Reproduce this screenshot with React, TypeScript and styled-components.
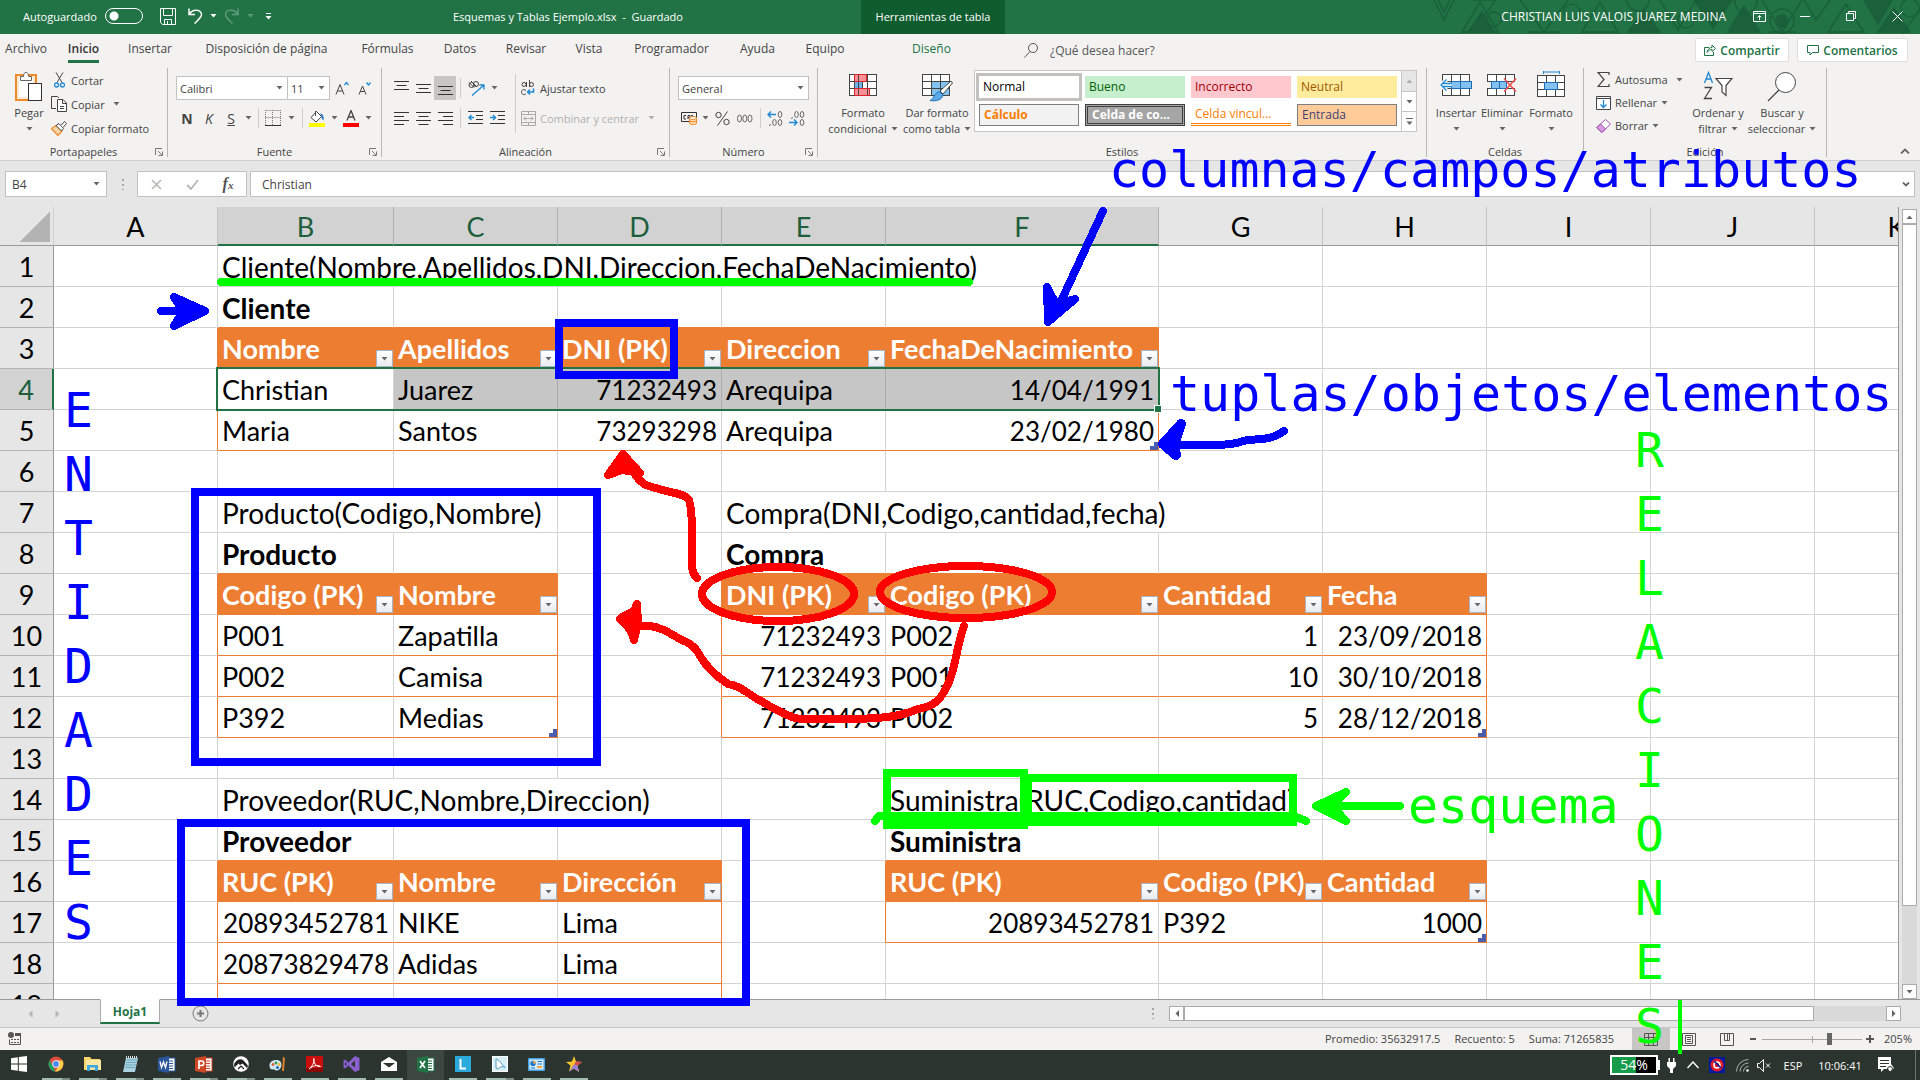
import React from "react";
import styled, { createGlobalStyle, css } from "styled-components";

const uiFont = '"Open Sans", "Noto Sans", sans-serif';
const cellFont = 'Lato, "Open Sans", sans-serif';
const monoFont = '"DejaVu Sans Mono", "Liberation Mono", monospace';

const GlobalStyle = createGlobalStyle`
  *, *::before, *::after { box-sizing: border-box; }
  body { margin: 0; background: #e6e6e6; font-family: ${uiFont}; font-size: 11px; color: #444; }
  button, input, select { font: inherit; color: inherit; margin: 0; padding: 0; border: 0; background: none; border-radius: 0; }
  a { color: inherit; text-decoration: none; }
`;

const Window = styled.div`
  position: relative;
  display: flex;
  flex-direction: column;
  height: 100vh;
  overflow: hidden;
  white-space: nowrap;
`;

/* ---------- title bar ---------- */

const TitleBar = styled.header`
  position: relative;
  display: flex;
  align-items: stretch;
  flex: none;
  height: 34px;
  padding-bottom: 2px;
  background: #217346;
  color: #fff;
`;

const Pattern = styled.svg`
  position: absolute;
  right: 0;
  top: 0;
`;

const QuickAccess = styled.div`
  display: flex;
  align-items: center;
  flex: 0 0 453px;
  padding-left: 23px;
`;

const AutoSave = styled.label`
  display: flex;
  align-items: center;
  gap: 8px;
  margin-right: 11px;
`;

const Switch = styled.input`
  appearance: none;
  width: 38px;
  height: 16px;
  border: 1px solid #fff;
  border-radius: 8px;
  background: radial-gradient(circle at 8px 7px, #fff 4px, transparent 5px);
`;

const BarButton = styled.button<{ $w: number }>`
  display: flex;
  align-items: center;
  justify-content: center;
  width: ${(p) => p.$w}px;
  height: 32px;
`;

const DocTitle = styled.div`
  display: flex;
  align-items: center;
  flex: 0 0 408px;
  white-space: pre;
`;

const ContextTab = styled.div`
  display: flex;
  align-items: center;
  justify-content: center;
  flex: 0 0 144px;
  height: 34px;
  padding-bottom: 2px;
  background: #0f5c2f;
`;

const Account = styled.div`
  position: relative;
  display: flex;
  align-items: center;
  margin-left: auto;
`;

const UserName = styled.span`
  margin-right: 10px;
  font-size: 12px;
`;

/* ---------- ribbon tabs ---------- */

const TabRow = styled.nav`
  display: flex;
  align-items: center;
  flex: none;
  height: 32px;
  padding-right: 12px;
  background: #f3f2f1;
  font-size: 12px;
`;

const Tab = styled.a<{ $w: number; $active?: boolean; $green?: boolean }>`
  display: flex;
  justify-content: center;
  width: ${(p) => p.$w}px;
  line-height: 23px;
  color: ${(p) => (p.$green ? "#217346" : "#444")};
  span {
    height: 26px;
    border-bottom: 3px solid ${(p) => (p.$active ? "#217346" : "transparent")};
    font-weight: ${(p) => (p.$active ? 600 : 400)};
    color: ${(p) => (p.$active ? "#333" : "inherit")};
  }
`;

const TellMe = styled.label`
  display: flex;
  align-items: center;
  gap: 12px;
  margin-left: 20px;
  input { width: 130px; height: 20px; }
  input::placeholder { color: #555; opacity: 1; }
`;

const ShareButtons = styled.div`
  display: flex;
  gap: 8px;
  margin-left: auto;
`;

const ShareButton = styled.button<{ $w: number }>`
  display: flex;
  align-items: center;
  justify-content: center;
  gap: 4px;
  width: ${(p) => p.$w}px;
  height: 24px;
  border: 1px solid #e1dfdd;
  border-radius: 2px;
  background: #fff;
  color: #217346;
  font-weight: 600;
`;

/* ---------- ribbon ---------- */

const Ribbon = styled.section`
  display: flex;
  flex: none;
  height: 95px;
  border-bottom: 1px solid #d0cecc;
  background: #f3f2f1;
`;

const Group = styled.div<{ $w: number }>`
  display: flex;
  flex-direction: column;
  flex: 0 0 ${(p) => p.$w}px;
  margin: 2px 0 3px;
  border-right: 1px solid #b9b7b5;
`;

const GroupBody = styled.div<{ $pad?: number }>`
  display: flex;
  flex: 1;
  min-height: 0;
  padding-left: ${(p) => p.$pad ?? 8}px;
`;

const GroupLabel = styled.div`
  display: flex;
  align-items: center;
  justify-content: center;
  height: 10px;
  line-height: 10px;
`;

const LabelText = styled.span`
  flex: 1;
  text-align: center;
`;

const Launcher = styled.button`
  display: flex;
  width: 12px;
  margin-left: -12px;
`;

const Stack = styled.div<{ $w?: number }>`
  display: flex;
  flex-direction: column;
  gap: 6px;
  width: ${(p) => (p.$w ? p.$w + "px" : "auto")};
  padding-top: 8px;
`;

const Line = styled.div`
  display: flex;
  align-items: center;
  height: 24px;
`;

const Tool = styled.button<{ $w?: number; $on?: boolean }>`
  display: flex;
  align-items: center;
  justify-content: center;
  width: ${(p) => p.$w ?? 22}px;
  height: 24px;
  background: ${(p) => (p.$on ? "#c8c6c4" : "transparent")};
  font-size: 14px;
`;

const Sep = styled.i<{ $w?: number; $h?: number }>`
  display: flex;
  justify-content: center;
  width: ${(p) => p.$w ?? 8}px;
  &::before { content: ""; width: 1px; height: ${(p) => p.$h ?? 20}px; background: #d0cecc; }
`;

const TallSep = styled(Sep)`
  padding-top: 6px;
`;

const BigButton = styled.button<{ $w: number }>`
  display: flex;
  flex-direction: column;
  align-items: center;
  align-self: flex-start;
  width: ${(p) => p.$w}px;
  padding-top: 3px;
  line-height: 16px;
`;

const BigIcon = styled.span`
  display: flex;
  align-items: flex-start;
  justify-content: center;
  height: 34px;
`;

const BigLine = styled.span`
  display: flex;
  align-items: center;
  gap: 4px;
  height: 16px;
`;

const SmallList = styled.div<{ $row: number }>`
  display: grid;
  align-content: start;
  grid-auto-rows: ${(p) => p.$row}px;
`;

const SumColumn = styled(SmallList)`
  width: 93px;
`;

const SmallButton = styled.button<{ $dim?: boolean }>`
  display: flex;
  align-items: center;
  gap: 4px;
  color: ${(p) => (p.$dim ? "#b1afad" : "#444")};
`;

const IconSlot = styled.span<{ $w?: number }>`
  display: flex;
  justify-content: center;
  width: ${(p) => p.$w ?? 16}px;
`;

const ComboBox = styled.div<{ $w: number }>`
  display: grid;
  align-items: center;
  width: ${(p) => p.$w}px;
  height: 24px;
  margin-right: -1px;
  border: 1px solid #c3c1bf;
  background: #fff;
  select {
    grid-area: 1 / 1;
    width: 100%;
    height: 22px;
    padding-left: 3px;
    appearance: none;
  }
  svg { grid-area: 1 / 1; justify-self: end; margin-right: 4px; pointer-events: none; }
`;

const Gallery = styled.div`
  display: flex;
  align-self: flex-start;
  height: 62px;
  margin-top: 2px;
  border: 1px solid #c8c6c4;
  background: #fff;
`;

const GalleryGrid = styled.div`
  display: grid;
  align-content: start;
  grid-template-columns: repeat(4, 100px);
  grid-auto-rows: 22px;
  gap: 6px;
  padding: 5px 4px 0 4px;
`;

type Look = "normal" | "good" | "bad" | "neutral" | "calc" | "check" | "linked" | "input";

const looks: Record<Look, ReturnType<typeof css>> = {
  normal: css`background: #fff; color: #000; outline: 3px solid #c3c1bf;`,
  good: css`background: #c6efce; color: #006100;`,
  bad: css`background: #ffc7ce; color: #9c0006;`,
  neutral: css`background: #ffeb9c; color: #9c5700;`,
  calc: css`background: #f2f2f2; color: #fa7d00; border: 1px solid #7f7f7f; font-weight: 700;`,
  check: css`background: #a5a5a5; color: #fff; border: 3px double #3f3f3f; font-weight: 700;`,
  linked: css`color: #fa7d00; border-bottom: 3px double #ff8001;`,
  input: css`background: #ffcc99; color: #3f3f76; border: 1px solid #7f7f7f;`,
};

const StyleChip = styled.button<{ $look: Look }>`
  padding-left: 4px;
  text-align: left;
  line-height: 16px;
  font-size: 12px;
  overflow: hidden;
  text-overflow: ellipsis;
  ${(p) => looks[p.$look]}
`;

const GalleryScroll = styled.div`
  display: grid;
  grid-template-rows: 20px 20px 20px;
  width: 15px;
  border-left: 1px solid #c8c6c4;
  button { display: flex; align-items: center; justify-content: center; }
  button:first-child { background: #e6e6e6; }
  button + button { border-top: 1px solid #c8c6c4; }
`;

const CollapseRibbon = styled.button`
  align-self: flex-end;
  margin: 0 10px 3px auto;
`;

/* ---------- formula bar ---------- */

const FormulaBar = styled.div`
  display: flex;
  align-items: center;
  flex: none;
  height: 46px;
  padding: 0 5px;
  font-size: 12px;
`;

const Box = styled.div<{ $w?: number }>`
  display: flex;
  align-items: center;
  flex: ${(p) => (p.$w ? `0 0 ${p.$w}px` : "1")};
  height: 26px;
  border: 1px solid #c3c1bf;
  background: #fff;
`;

const FunctionBox = styled(Box)`
  margin-right: 3px;
`;

const NameInput = styled.input`
  width: 87px;
  padding-left: 6px;
`;

const FormulaInput = styled.input`
  flex: 1;
  padding-left: 11px;
`;

const Grip = styled.i`
  width: 2px;
  height: 11px;
  margin: 0 13px 0 15px;
  background: repeating-linear-gradient(#a6a6a6 0 2px, transparent 2px 5px);
`;

const FormulaIcon = styled.button`
  display: flex;
  flex: 1;
  justify-content: center;
`;

const FormulaExpand = styled.button`
  display: flex;
  margin-right: 4px;
`;

const FxMark = styled.span`
  font-family: "Liberation Serif", serif;
  font-size: 16px;
  font-style: italic;
  font-weight: 700;
  color: #555;
  small { font-size: 11px; }
`;

/* ---------- sheet ---------- */

const SheetArea = styled.main`
  display: flex;
  flex: 1;
  min-height: 0;
  border-bottom: 1px solid #999;
`;

const Sheet = styled.div`
  position: relative;
  flex: 1;
  overflow: hidden;
  border-right: 1px solid #999;
`;

const Grid = styled.table`
  width: 1979px;
  table-layout: fixed;
  border-collapse: separate;
  border-spacing: 0;
  background: #fff;
  color: #000;
  font-family: ${cellFont};
  font-size: 27px;
  line-height: 32px;
`;

const Corner = styled.th`
  height: 39px;
  padding: 0;
  border-right: 1px solid #cfcfcf;
  border-bottom: 1px solid #999;
  background: linear-gradient(135deg, transparent 50%, #b3b3b3 50%) 20px 5px / 30px 30px no-repeat #e6e6e6;
`;

const ColHead = styled.th<{ $on: boolean }>`
  height: 39px;
  padding: 2px 0 0;
  font-weight: 400;
  border-right: 1px solid ${(p) => (p.$on ? "#b1b1b1" : "#c4c4c4")};
  border-bottom: ${(p) => (p.$on ? "2px solid #217346" : "1px solid #999")};
  background: ${(p) => (p.$on ? "#d2d2d2" : "#e6e6e6")};
  color: ${(p) => (p.$on ? "#1e5e3c" : "#000")};
`;

const RowHead = styled.th<{ $on: boolean }>`
  height: 41px;
  padding: 2px 0 0;
  font-weight: 400;
  border-right: ${(p) => (p.$on ? "2px solid #217346" : "1px solid #999")};
  border-bottom: 1px solid #b4b4b4;
  background: ${(p) => (p.$on ? "#d2d2d2" : "#e6e6e6")};
  color: ${(p) => (p.$on ? "#1e5e3c" : "#000")};
`;

type CellStyle = {
  $size: number;
  $right: boolean;
  $bold: boolean;
  $header: boolean;
  $shade: boolean;
  $edgeR: boolean;
  $edgeB: boolean;
};

const Cell = styled.td<CellStyle>`
  position: relative;
  height: 41px;
  padding: 2px 4px 0;
  text-align: ${(p) => (p.$right ? "right" : "left")};
  font-weight: ${(p) => (p.$bold || p.$header ? 700 : 400)};
  font-size: ${(p) => p.$size}px;
  border-right: 1px solid ${(p) => (p.$edgeR ? "#ed7d31" : p.$shade ? "#ababab" : "#d4d4d4")};
  border-bottom: 1px solid ${(p) => (p.$edgeB ? "#ed7d31" : "#d4d4d4")};
  ${(p) => p.$header && css`background: #ed7d31; color: #fff;`}
  ${(p) => p.$shade && css`background: #c6c6c6;`}
`;

const FilterButton = styled.button`
  position: absolute;
  right: 0;
  bottom: 1px;
  display: flex;
  align-items: center;
  justify-content: center;
  width: 17px;
  height: 17px;
  border: 1px solid #a9b4c4;
  background: linear-gradient(#fff, #e8ebf0);
`;

const TableCorner = styled.i`
  position: absolute;
  right: 0;
  bottom: 0;
  width: 8px;
  height: 8px;
  background: #4a5eb0;
  clip-path: polygon(50% 0, 100% 0, 100% 100%, 0 100%, 0 50%, 50% 50%);
`;

const Selection = styled.div`
  position: absolute;
  left: 216px;
  top: 160px;
  width: 944px;
  height: 44px;
  border: 2px solid #217346;
  pointer-events: none;
  &::after {
    content: "";
    position: absolute;
    right: -3px;
    bottom: -3px;
    width: 6px;
    height: 6px;
    background: #217346;
    box-shadow: 0 0 0 1px #fff;
  }
`;

const VScroll = styled.div`
  display: flex;
  flex-direction: column;
  flex: none;
  width: 15px;
  margin: 2px 3px 0 3px;
`;

const ScrollButton = styled.button`
  display: flex;
  align-items: center;
  justify-content: center;
  flex: none;
  width: 15px;
  height: 15px;
  border: 1px solid #ababab;
  background: #fff;
`;

const Thumb = styled.div<{ $grow: number }>`
  flex: ${(p) => p.$grow};
  border: 1px solid #ababab;
  background: #fff;
`;

const Track = styled.div<{ $grow: number }>`
  flex: ${(p) => p.$grow};
  background: #dadada;
`;

/* ---------- sheet tabs and status ---------- */

const SheetBar = styled.div`
  display: flex;
  flex: none;
  height: 27px;
  padding-right: 19px;
`;

const SheetNav = styled.div`
  display: flex;
  align-items: center;
  justify-content: center;
  gap: 22px;
  width: 100px;
  padding-right: 13px;
`;

const SheetTab = styled.button`
  width: 60px;
  height: 25px;
  margin-top: -1px;
  border: 1px solid #ababab;
  border-top-color: #fff;
  border-bottom: 2px solid #217346;
  background: #fff;
  color: #217346;
  font-size: 12px;
  font-weight: 700;
`;

const AddSheet = styled.button`
  display: flex;
  align-items: center;
  margin-left: 32px;
`;

const HScroll = styled.div`
  display: flex;
  align-items: center;
  width: 749px;
  margin-left: auto;
  > div { height: 15px; }
`;

const HGrip = styled(Grip)`
  margin: 0 15px 0 0;
`;

const StatusBar = styled.footer`
  display: flex;
  align-items: center;
  flex: none;
  height: 23px;
  padding: 0 8px;
  border-top: 1px solid #c8c6c4;
  background: #f3f2f1;
`;

const Stats = styled.div`
  display: flex;
  gap: 14px;
  margin: 0 18px 2px auto;
`;

const ViewButton = styled.button<{ $on?: boolean }>`
  display: flex;
  align-items: center;
  justify-content: center;
  width: 38px;
  height: 22px;
  background: ${(p) => (p.$on ? "#c8c6c4" : "transparent")};
`;

const ZoomControl = styled.label`
  display: flex;
  align-items: center;
  gap: 4px;
  width: 166px;
  span { margin: 0 0 2px auto; }
`;

const ZoomRange = styled.input`
  appearance: none;
  width: 100px;
  height: 14px;
  background: linear-gradient(#a6a6a6, #a6a6a6) 0 50% / 100% 1px no-repeat, linear-gradient(#a6a6a6, #a6a6a6) 50% 50% / 1px 7px no-repeat;
  &::-webkit-slider-thumb { appearance: none; width: 5px; height: 12px; background: #666; }
`;

/* ---------- taskbar ---------- */

const TaskBar = styled.div`
  display: flex;
  flex: none;
  height: 30px;
  background: #2b342e;
  color: #fff;
`;

const TaskButton = styled.button<{ $open?: boolean; $active?: boolean; $multi?: boolean }>`
  display: flex;
  align-items: center;
  justify-content: center;
  width: 37px;
  height: 30px;
  background: ${(p) => (p.$active ? "#3d4741" : "transparent")};
  border-bottom: 2px solid transparent;
  ${(p) =>
    p.$open &&
    css`
      border-image: linear-gradient(90deg, transparent 5px, #a3bcad 5px, #a3bcad ${p.$multi ? 25 : 33}px, ${p.$multi ? "#7b8d82" : "#a3bcad"} ${p.$multi ? 25 : 33}px, ${p.$multi ? "#7b8d82" : "#a3bcad"} 33px, transparent 33px) 0 0 2 0;
    `}
`;

const Tray = styled.div`
  display: flex;
  align-items: center;
  margin-left: auto;
`;

const TrayItem = styled.span<{ $w: number }>`
  display: flex;
  align-items: center;
  justify-content: center;
  width: ${(p) => p.$w}px;
`;

const Battery = styled.span`
  width: 48px;
  height: 20px;
  border: 2px solid #fff;
  background: linear-gradient(90deg, #169b49 54%, #000 54%);
  text-align: center;
  font-size: 14px;
  line-height: 15px;
`;

const ShowDesktop = styled.button`
  width: 5px;
  height: 30px;
  border-left: 1px solid #6b736e;
`;

/* ---------- annotations ---------- */

const Ink = styled.svg`
  position: absolute;
  left: 0;
  top: 0;
  pointer-events: none;
`;

const Note = styled.div<{ $x: number; $y: number; $green?: boolean }>`
  position: absolute;
  left: ${(p) => p.$x}px;
  top: ${(p) => p.$y}px;
  color: ${(p) => (p.$green ? "#00ff00" : "#0000ff")};
  font-family: ${monoFont};
  font-size: 50px;
  line-height: 64px;
  pointer-events: none;
`;

const TallNote = styled(Note)`
  display: flex;
  flex-direction: column;
  font-size: 48px;
`;

const NoteCaret = styled.i`
  position: absolute;
  left: 1678px;
  top: 1000px;
  width: 4px;
  height: 54px;
  background: #00ff00;
`;

/* ---------- icons ---------- */

type IconProps = { w: number; h: number; children: React.ReactNode; s?: string };

function Icon({ w, h, children, s = "#444" }: IconProps) {
  return (
    <svg width={w} height={h} viewBox={`0 0 ${w} ${h}`} fill="none" stroke={s} aria-hidden="true">
      {children}
    </svg>
  );
}

const Caret = ({ c = "#666", up = false }: { c?: string; up?: boolean }) => (
  <Icon w={7} h={4} s="none">
    <path d={up ? "M0.5 4 L3.5 0.5 L6.5 4Z" : "M0.5 0 L3.5 3.5 L6.5 0Z"} fill={c} />
  </Icon>
);

const Bars = ({ y, x }: { y: number[]; x: "l" | "c" | "r" | "v" }) => (
  <Icon w={15} h={15} s="#333">
    {y.map((v, i) => {
      const short = i % 2 === 1;
      const a = short ? (x === "l" ? 0 : x === "r" ? 5 : 2.5) : 0;
      const b = short ? (x === "l" ? 10 : x === "r" ? 15 : 12.5) : 15;
      return <path key={v} d={`M${a} ${v + 0.5} H${b}`} />;
    })}
  </Icon>
);

const GridLines = ({ hi }: { hi: React.ReactNode }) => (
  <>
    <rect x="0.5" y="0.5" width="27" height="21" fill="#fff" />
    {hi}
    <path d="M0.5 7.5H27.5M0.5 14.5H27.5M9.5 0.5V21.5M18.5 0.5V21.5" />
    <rect x="0.5" y="0.5" width="27" height="21" />
  </>
);

function TitlePattern() {
  return (
    <Pattern width="488" height="34" viewBox="0 0 488 34" fill="none" stroke="#1a6039" strokeWidth="1.5" aria-hidden="true">
      <path d="M2 0 L12 20 L22 0 M6 0 L12 12 L18 0" />
      <path d="M30 32 L48 2 L66 32Z M40 0 L64 0 L52 16" />
      <circle cx="62" cy="19" r="7" />
      <path d="M36 32 L50 12 L62 32Z" fill="#1a6039" />
      <path d="M88 0 L112 32 L136 0 M96 32 H128" />
      <circle cx="140" cy="12" r="8" />
      <path d="M150 32 L168 2 L186 32Z" />
      <circle cx="206" cy="0" r="11" />
      <path d="M196 32 L212 10 L228 32Z" fill="#1a6039" />
      <path d="M228 0 L246 30 L264 0" />
      <path d="M262 0 H300 L281 28Z" fill="#1a6039" />
      <circle cx="254" cy="20" r="8" />
      <path d="M296 32 L312 6 L328 32Z" fill="#1a6039" />
      <circle cx="314" cy="2" r="11" />
      <path d="M330 0 L350 32 L370 0 M336 32 H364" />
      <circle cx="350" cy="21" r="12" />
      <circle cx="350" cy="21" r="6" fill="#1a6039" />
      <path d="M372 0 L384 20 L398 0 M396 32 L414 4 L432 32Z" />
      <path d="M432 0 L446 24 L460 0Z M446 32 L462 8 L478 32Z" fill="#1a6039" />
      <circle cx="478" cy="8" r="9" />
      <path d="M470 34 L488 10" />
    </Pattern>
  );
}

/* ---------- data ---------- */

const tabs = [
  { text: "Archivo", w: 52 },
  { text: "Inicio", w: 63, active: true },
  { text: "Insertar", w: 70 },
  { text: "Disposición de página", w: 163 },
  { text: "Fórmulas", w: 79 },
  { text: "Datos", w: 66 },
  { text: "Revisar", w: 66 },
  { text: "Vista", w: 60 },
  { text: "Programador", w: 105 },
  { text: "Ayuda", w: 67 },
  { text: "Equipo", w: 68 },
  { text: "Diseño", w: 145, green: true },
];

const styleChips: { look: Look; text: string }[] = [
  { look: "normal", text: "Normal" },
  { look: "good", text: "Bueno" },
  { look: "bad", text: "Incorrecto" },
  { look: "neutral", text: "Neutral" },
  { look: "calc", text: "Cálculo" },
  { look: "check", text: "Celda de co..." },
  { look: "linked", text: "Celda vincul..." },
  { look: "input", text: "Entrada" },
];

const columns = "ABCDEFGHIJK".split("");
const columnWidths = [164, 176, 164, 164, 164, 273, 164, 164, 164, 164, 164];

type Entry = { t: string; span?: number; bold?: boolean; right?: boolean };

const cells: Record<string, Entry> = {
  B1: { t: "Cliente(Nombre,Apellidos,DNI,Direccion,FechaDeNacimiento)", span: 5 },
  B2: { t: "Cliente", bold: true },
  B3: { t: "Nombre" }, C3: { t: "Apellidos" }, D3: { t: "DNI (PK)" }, E3: { t: "Direccion" }, F3: { t: "FechaDeNacimiento" },
  B4: { t: "Christian" }, C4: { t: "Juarez" }, D4: { t: "71232493", right: true }, E4: { t: "Arequipa" }, F4: { t: "14/04/1991", right: true },
  B5: { t: "Maria" }, C5: { t: "Santos" }, D5: { t: "73293298", right: true }, E5: { t: "Arequipa" }, F5: { t: "23/02/1980", right: true },
  B7: { t: "Producto(Codigo,Nombre)", span: 2 }, E7: { t: "Compra(DNI,Codigo,cantidad,fecha)", span: 3 },
  B8: { t: "Producto", bold: true }, E8: { t: "Compra", bold: true },
  B9: { t: "Codigo (PK)" }, C9: { t: "Nombre" }, E9: { t: "DNI (PK)" }, F9: { t: "Codigo (PK)" }, G9: { t: "Cantidad" }, H9: { t: "Fecha" },
  B10: { t: "P001" }, C10: { t: "Zapatilla" }, E10: { t: "71232493", right: true }, F10: { t: "P002" }, G10: { t: "1", right: true }, H10: { t: "23/09/2018", right: true },
  B11: { t: "P002" }, C11: { t: "Camisa" }, E11: { t: "71232493", right: true }, F11: { t: "P001" }, G11: { t: "10", right: true }, H11: { t: "30/10/2018", right: true },
  B12: { t: "P392" }, C12: { t: "Medias" }, E12: { t: "71232493", right: true }, F12: { t: "P002" }, G12: { t: "5", right: true }, H12: { t: "28/12/2018", right: true },
  B14: { t: "Proveedor(RUC,Nombre,Direccion)", span: 3 }, F14: { t: "Suministra(RUC,Codigo,cantidad)", span: 2 },
  B15: { t: "Proveedor", bold: true }, F15: { t: "Suministra", bold: true },
  B16: { t: "RUC (PK)" }, C16: { t: "Nombre" }, D16: { t: "Dirección" }, F16: { t: "RUC (PK)" }, G16: { t: "Codigo (PK)" }, H16: { t: "Cantidad" },
  B17: { t: "20893452781", right: true }, C17: { t: "NIKE" }, D17: { t: "Lima" }, F17: { t: "20893452781", right: true }, G17: { t: "P392" }, H17: { t: "1000", right: true },
  B18: { t: "20873829478", right: true }, C18: { t: "Adidas" }, D18: { t: "Lima" },
};

/* Column and row bounds of each formatted table, with its first row as the header. */
const tables = [
  { c0: 1, c1: 5, r0: 3, r1: 5 },
  { c0: 1, c1: 2, r0: 9, r1: 12 },
  { c0: 4, c1: 7, r0: 9, r1: 12 },
  { c0: 1, c1: 3, r0: 16, r1: 20 },
  { c0: 5, c1: 7, r0: 16, r1: 17 },
];

function sheetRow(row: number) {
  const out: React.ReactNode[] = [];
  for (let c = 0; c < columns.length; c++) {
    const entry = cells[columns[c] + row];
    const last = c + (entry?.span ?? 1) - 1;
    const here = tables.find((t) => c >= t.c0 && c <= t.c1 && row >= t.r0 && row <= t.r1);
    const next = tables.find((t) => last + 1 === t.c0 && row >= t.r0 && row <= t.r1);
    const below = tables.find((t) => c >= t.c0 && c <= t.c1 && row + 1 === t.r0);
    const header = !!here && row === here.r0;
    out.push(
      <Cell
        key={c}
        colSpan={entry?.span}
        $size={entry?.right ? 26 : entry?.span || entry?.bold ? 28 : 27}
        $right={!!entry?.right}
        $bold={!!entry?.bold}
        $header={header}
        $shade={row === 4 && c >= 2 && c <= 5}
        $edgeR={header || !!next || (!!here && last === here.c1)}
        $edgeB={!!here || !!below}
      >
        {entry?.t}
        {header && (
          <FilterButton aria-label={`Filtrar ${entry?.t}`}>
            <Caret />
          </FilterButton>
        )}
        {here && c === here.c1 && row === here.r1 && <TableCorner />}
      </Cell>
    );
    c = last;
  }
  return out;
}

/* ---------- sections ---------- */

function Title() {
  return (
    <TitleBar>
      <TitlePattern />
      <QuickAccess>
        <AutoSave>
          Autoguardado
          <Switch type="checkbox" role="switch" />
        </AutoSave>
        <BarButton $w={28} aria-label="Guardar">
          <Icon w={16} h={17} s="#fff">
            <path d="M0.5 0.5H15.5V16.5H2.5L0.5 14.5Z M3.5 0.5V7.5H12.5V0.5 M4.5 16.5V11.5H11.5V16.5 M7.5 16V13" />
          </Icon>
        </BarButton>
        <BarButton $w={28} aria-label="Deshacer">
          <Icon w={15} h={16} s="#fff">
            <path d="M1 0.5V6.5H7 M1.5 6 C5 0.5 13 1.5 13.5 6.5 C13.5 9.5 10 12 6.5 15.5" strokeWidth="1.5" />
          </Icon>
        </BarButton>
        <Caret c="#fff" />
        <BarButton $w={30} aria-label="Rehacer">
          <Icon w={15} h={16} s="#5e9c78">
            <path d="M14 0.5V6.5H8 M13.5 6 C10 0.5 2 1.5 1.5 6.5 C1.5 9.5 5 12 8.5 15.5" strokeWidth="1.5" />
          </Icon>
        </BarButton>
        <Caret c="#5e9c78" />
        <BarButton $w={30} aria-label="Personalizar barra">
          <Icon w={7} h={7} s="none">
            <path d="M1 0H6V1H1Z M0.5 3H6.5L3.5 6.5Z" fill="#fff" />
          </Icon>
        </BarButton>
      </QuickAccess>
      <DocTitle>{"Esquemas y Tablas Ejemplo.xlsx  -  Guardado"}</DocTitle>
      <ContextTab>Herramientas de tabla</ContextTab>
      <Account>
        <UserName>CHRISTIAN LUIS VALOIS JUAREZ MEDINA</UserName>
        <BarButton $w={46} aria-label="Opciones de cinta">
          <Icon w={13} h={11} s="#fff"><path d="M0.5 0.5H12.5V10.5H0.5Z M0.5 2.5H12.5 M6.5 9V4.5 M4.5 6.5L6.5 4.5L8.5 6.5" /></Icon>
        </BarButton>
        <BarButton $w={46} aria-label="Minimizar">
          <Icon w={10} h={10} s="#fff"><path d="M0 5.5H10" /></Icon>
        </BarButton>
        <BarButton $w={46} aria-label="Restaurar">
          <Icon w={10} h={10} s="#fff"><path d="M0.5 2.5H7.5V9.5H0.5Z M2.5 2.5V0.5H9.5V7.5H7.5" /></Icon>
        </BarButton>
        <BarButton $w={46} aria-label="Cerrar">
          <Icon w={11} h={11} s="#fff"><path d="M0.5 0.5L10.5 10.5M10.5 0.5L0.5 10.5" /></Icon>
        </BarButton>
      </Account>
    </TitleBar>
  );
}

function Tabs() {
  return (
    <TabRow>
      {tabs.map((t) => (
        <Tab key={t.text} href="#" $w={t.w} $active={t.active} $green={t.green}>
          <span>{t.text}</span>
        </Tab>
      ))}
      <TellMe>
        <Icon w={14} h={15} s="#555"><circle cx="9" cy="5" r="4.5" /><path d="M6 8.5L0.5 14.5" /></Icon>
        <input placeholder="¿Qué desea hacer?" />
      </TellMe>
      <ShareButtons>
        <ShareButton $w={94}>
          <Icon w={12} h={12} s="#217346"><path d="M5 3.5H0.5V11.5H9.5V8 M3 8.5C3.5 5 6 3.5 8 3.5V1L11.5 4.5L8 7.5V5.5C6 5.5 4.5 6.5 3 8.5Z" /></Icon>
          Compartir
        </ShareButton>
        <ShareButton $w={111}>
          <Icon w={12} h={12} s="#217346"><path d="M0.5 1.5H11.5V8.5H5.5L3 11V8.5H0.5Z" /></Icon>
          Comentarios
        </ShareButton>
      </ShareButtons>
    </TabRow>
  );
}

function Label({ text, launch }: { text: string; launch?: boolean }) {
  return (
    <GroupLabel>
      <LabelText>{text}</LabelText>
      {launch && (
        <Launcher aria-label={`Opciones de ${text}`}>
          <Icon w={8} h={8} s="#777"><path d="M0.5 7V0.5H7 M3 3L7 7 M7.5 3.5V7.5H3.5" /></Icon>
        </Launcher>
      )}
    </GroupLabel>
  );
}

function RibbonArea() {
  return (
    <Ribbon>
      <Group $w={168}>
        <GroupBody $pad={7}>
          <BigButton $w={44}>
            <BigIcon>
              <Icon w={28} h={31}>
                <rect x="1" y="4" width="20" height="25" fill="#fce8d5" stroke="#f08b2c" strokeWidth="2" />
                <rect x="4" y="7" width="14" height="19" fill="#fff" stroke="none" />
                <path d="M5.5 9.5V5.5H8.5C8.5 0 13.5 0 13.5 5.5H16.5V9.5Z" fill="#fff" stroke="#666" />
                <rect x="13.5" y="12.5" width="13" height="17" fill="#fff" stroke="#333" />
              </Icon>
            </BigIcon>
            <BigLine>Pegar</BigLine>
            <BigLine><Caret /></BigLine>
          </BigButton>
          <SmallList $row={24}>
            <SmallButton>
              <IconSlot>
                <Icon w={11} h={16}>
                  <path d="M2 0.5L8 10.5M9 0.5L3 10.5" />
                  <circle cx="2.5" cy="13" r="2" stroke="#1e88d2" strokeWidth="1.3" />
                  <circle cx="8.5" cy="13" r="2" stroke="#1e88d2" strokeWidth="1.3" />
                </Icon>
              </IconSlot>
              Cortar
            </SmallButton>
            <SmallButton>
              <IconSlot>
                <Icon w={16} h={16}>
                  <path d="M5 12.5H0.5V0.5H6.5L8 2" />
                  <path d="M6.5 3.5H12L15.5 7V15.5H6.5Z M11.5 3.5V7.5H15.5 M9 10.5H13M9 12.5H13" fill="#fff" />
                </Icon>
              </IconSlot>
              Copiar
              <IconSlot><Caret /></IconSlot>
            </SmallButton>
            <SmallButton>
              <IconSlot>
                <Icon w={16} h={15}>
                  <path d="M0.5 7.5L5 4.5L11 10L7 14.5Z" fill="#fbd5a8" stroke="#f08b2c" strokeWidth="1.3" />
                  <path d="M5 4.5L8 2.5L12.5 7.5L10.5 10Z" fill="#fff" />
                  <path d="M10 4.5L13.5 0.5L15.5 2.5L12 6.5" fill="#fff" />
                </Icon>
              </IconSlot>
              Copiar formato
            </SmallButton>
          </SmallList>
        </GroupBody>
        <Label text="Portapapeles" launch />
      </Group>

      <Group $w={214}>
        <GroupBody>
          <Stack>
            <Line>
              <ComboBox $w={112}>
                <select aria-label="Fuente"><option>Calibri</option></select>
                <Caret />
              </ComboBox>
              <ComboBox $w={43}>
                <select aria-label="Tamaño"><option>11</option></select>
                <Caret />
              </ComboBox>
              <Tool $w={26} aria-label="Aumentar tamaño">
                <Icon w={14} h={14}><path d="M1 13.5L5 3.5L9 13.5M2.5 10H7.5" /><path d="M9.5 4L11.5 1.5L13.5 4" stroke="#1e88d2" strokeWidth="1.3" /></Icon>
              </Tool>
              <Tool $w={18} aria-label="Disminuir tamaño">
                <Icon w={13} h={14}><path d="M1 13.5L4.5 5L8 13.5M2.5 10.5H6.5" /><path d="M8.5 1.5L10.5 4L12.5 1.5" stroke="#1e88d2" strokeWidth="1.3" /></Icon>
              </Tool>
            </Line>
            <Line>
              <Tool><b>N</b></Tool>
              <Tool><em>K</em></Tool>
              <Tool><u>S</u></Tool>
              <Tool $w={12} aria-label="Más subrayados"><Caret /></Tool>
              <Sep />
              <Tool aria-label="Bordes">
                <Icon w={16} h={16} s="#777">
                  <path d="M0.5 0.5H15.5M0.5 7.5H15.5M0.5 0V15M7.5 0V15M15.5 0V15" strokeDasharray="1 1" />
                  <path d="M0 15.5H16" stroke="#333" />
                </Icon>
              </Tool>
              <Tool $w={14} aria-label="Más bordes"><Caret /></Tool>
              <Sep />
              <Tool aria-label="Color de relleno">
                <Icon w={16} h={17}>
                  <path d="M2 7.5L7.5 1.5L12.5 6.5L7 12Z M6.5 1V6" fill="#fff" />
                  <path d="M11 3.5C14.5 4 15 7 14.5 10.5C12.5 9 12.5 7 12.5 6" fill="#1e6fb8" stroke="none" />
                  <rect y="13" width="16" height="4" fill="#ff0" stroke="none" />
                </Icon>
              </Tool>
              <Tool $w={12} aria-label="Más rellenos"><Caret /></Tool>
              <Tool aria-label="Color de fuente">
                <Icon w={16} h={17}>
                  <path d="M4 10.5L8 0.5L12 10.5M5.5 7H10.5" strokeWidth="1.3" />
                  <rect y="13" width="16" height="4" fill="#f00" stroke="none" />
                </Icon>
              </Tool>
              <Tool $w={12} aria-label="Más colores"><Caret /></Tool>
            </Line>
          </Stack>
        </GroupBody>
        <Label text="Fuente" launch />
      </Group>

      <Group $w={288}>
        <GroupBody>
          <Stack $w={120}>
            <Line>
              <Tool aria-label="Alinear arriba"><Bars y={[0, 4, 8]} x="v" /></Tool>
              <Tool aria-label="Alinear al medio"><Bars y={[3, 7, 11]} x="v" /></Tool>
              <Tool $on aria-label="Alinear abajo"><Bars y={[5, 9, 13]} x="v" /></Tool>
              <Sep />
              <Tool $w={24} aria-label="Orientación">
                <Icon w={17} h={16}>
                  <circle cx="3.5" cy="5" r="2.5" /><path d="M6 7.5L1 2.5" /><circle cx="8" cy="4" r="2.5" /><path d="M3 1L9 7" />
                  <path d="M4 15.5L15.5 5.5M11.5 5H16V9.5" stroke="#1e88d2" strokeWidth="1.3" />
                </Icon>
              </Tool>
              <Tool $w={12} aria-label="Más orientaciones"><Caret /></Tool>
            </Line>
            <Line>
              <Tool aria-label="Alinear a la izquierda"><Bars y={[1, 5, 9, 13]} x="l" /></Tool>
              <Tool aria-label="Centrar"><Bars y={[1, 5, 9, 13]} x="c" /></Tool>
              <Tool aria-label="Alinear a la derecha"><Bars y={[1, 5, 9, 13]} x="r" /></Tool>
              <Sep />
              <Tool aria-label="Disminuir sangría">
                <Icon w={15} h={14} s="#333"><path d="M0 0.5H15M8 4.5H15M8 8.5H15M0 12.5H15" /><path d="M6 6.5H1M3.5 4L1 6.5L3.5 9" stroke="#1e88d2" strokeWidth="1.4" /></Icon>
              </Tool>
              <Tool aria-label="Aumentar sangría">
                <Icon w={15} h={14} s="#333"><path d="M0 0.5H15M8 4.5H15M8 8.5H15M0 12.5H15" /><path d="M0 6.5H5.5M3 4L5.5 6.5L3 9" stroke="#1e88d2" strokeWidth="1.4" /></Icon>
              </Tool>
            </Line>
          </Stack>
          <TallSep $w={10} $h={59} />
          <Stack>
            <Line>
              <SmallButton>
                <IconSlot>
                  <Icon w={14} h={16}>
                    <circle cx="3" cy="4.5" r="2" /><path d="M5.5 2V7 M8.5 0V7" /><circle cx="10.5" cy="4.5" r="2" />
                    <path d="M5 10.5C2 8.5 0.5 10.5 0.5 12C0.5 14 2.5 15.5 5 14" />
                    <path d="M12.5 8.5V12H6.5M9 9.5L6.5 12L9 14.5" stroke="#1e88d2" strokeWidth="1.5" />
                  </Icon>
                </IconSlot>
                Ajustar texto
              </SmallButton>
            </Line>
            <Line>
              <SmallButton $dim>
                <IconSlot>
                  <Icon w={15} h={15} s="#aaa"><path d="M0.5 0.5H14.5V14.5H0.5Z M0.5 3.5H14.5M0.5 11.5H14.5M7.5 0.5V3.5M7.5 11.5V14.5 M2.5 7.5H12.5M5 5.5L3 7.5L5 9.5M10 5.5L12 7.5L10 9.5" /></Icon>
                </IconSlot>
                Combinar y centrar
                <IconSlot><Caret c="#b1afad" /></IconSlot>
              </SmallButton>
            </Line>
          </Stack>
        </GroupBody>
        <Label text="Alineación" launch />
      </Group>

      <Group $w={148}>
        <GroupBody>
          <Stack>
            <Line>
              <ComboBox $w={131}>
                <select aria-label="Formato de número"><option>General</option></select>
                <Caret />
              </ComboBox>
            </Line>
            <Line>
              <Tool aria-label="Moneda">
                <Icon w={17} h={14} s="#333">
                  <path d="M0.5 1.5H15.5V10.5H0.5Z M5 4.5H3V8H5M7 8V4.5H9V6.5H7M12 4.5H10.5V8" />
                  <path d="M8.5 7V12.5C10 14 15 14 15.5 12.5V7" fill="#fdd9ae" stroke="#f08b2c" />
                  <path d="M8.5 10C10 11 14 11 15.5 10" stroke="#f08b2c" />
                  <ellipse cx="12" cy="7" rx="3.5" ry="1.5" fill="#fff" stroke="#f08b2c" />
                </Icon>
              </Tool>
              <Tool $w={10} aria-label="Más monedas"><Caret /></Tool>
              <Tool $w={24} aria-label="Porcentaje">
                <Icon w={15} h={15}><circle cx="3.5" cy="4" r="2.7" /><circle cx="11.5" cy="11" r="2.7" /><path d="M12.5 0.5L2.5 14.5" /></Icon>
              </Tool>
              <Tool aria-label="Miles">
                <Icon w={16} h={9} s="#666"><ellipse cx="2.5" cy="4.5" rx="2" ry="3.5" /><ellipse cx="7.8" cy="4.5" rx="2" ry="3.5" /><ellipse cx="13" cy="4.5" rx="2" ry="3.5" /></Icon>
              </Tool>
              <Sep />
              <Tool aria-label="Aumentar decimales">
                <Icon w={16} h={15} s="#666">
                  <ellipse cx="13" cy="3.5" rx="1.8" ry="3" /><ellipse cx="13" cy="11.5" rx="1.8" ry="3" /><ellipse cx="7.5" cy="11.5" rx="1.8" ry="3" /><path d="M3.5 13L2.5 15" />
                  <path d="M9 3.5H1M4 0.5L1 3.5L4 6.5" stroke="#1e88d2" strokeWidth="1.4" />
                </Icon>
              </Tool>
              <Tool aria-label="Disminuir decimales">
                <Icon w={16} h={15} s="#666">
                  <ellipse cx="13" cy="3.5" rx="1.8" ry="3" /><ellipse cx="7.5" cy="3.5" rx="1.8" ry="3" /><ellipse cx="13" cy="11.5" rx="1.8" ry="3" /><path d="M3.5 6L2.5 8" />
                  <path d="M0 11.5H8M5 8.5L8 11.5L5 14.5" stroke="#1e88d2" strokeWidth="1.4" />
                </Icon>
              </Tool>
            </Line>
          </Stack>
        </GroupBody>
        <Label text="Número" launch />
      </Group>

      <Group $w={609}>
        <GroupBody>
          <BigButton $w={74}>
            <BigIcon>
              <Icon w={28} h={27}>
                <g transform="translate(0 3)">
                  <GridLines hi={<><rect x="5.5" y="0.5" width="13" height="7" fill="#ff8f94" /><rect x="5.5" y="7.5" width="8" height="7" fill="#6db3ea" /><rect x="5.5" y="14.5" width="15" height="7" fill="#ff8f94" /></>} />
                  <path d="M5.5 0.5H17.5V7.5H5.5Z M5.5 14.5H20.5V21.5H5.5Z" stroke="#d8232a" />
                </g>
              </Icon>
            </BigIcon>
            <BigLine>Formato</BigLine>
            <BigLine>condicional <Caret /></BigLine>
          </BigButton>
          <BigButton $w={74}>
            <BigIcon>
              <Icon w={31} h={31}>
                <g transform="translate(0 3)">
                  <GridLines hi={<rect x="9.5" y="7.5" width="18" height="14" fill="#84c1f0" stroke="#1e6fb8" />} />
                </g>
                <path d="M29 10L30.5 12L21 23L18 20Z" fill="#fff" />
                <path d="M17.5 20.5L21 24C20 29 14 30.5 8 29.5C12 28 12 22 17.5 20.5Z" fill="#5aa9e6" stroke="#1e6fb8" />
              </Icon>
            </BigIcon>
            <BigLine>Dar formato</BigLine>
            <BigLine>como tabla <Caret /></BigLine>
          </BigButton>
          <Gallery>
            <GalleryGrid>
              {styleChips.map((s) => (
                <StyleChip key={s.text} $look={s.look}>{s.text}</StyleChip>
              ))}
            </GalleryGrid>
            <GalleryScroll>
              <button aria-label="Estilos anteriores"><Caret up c="#b1afad" /></button>
              <button aria-label="Estilos siguientes"><Caret /></button>
              <button aria-label="Más estilos"><Icon w={7} h={8} s="none"><path d="M0 0H7V1H0Z M0.5 3.5H6.5L3.5 7Z" fill="#666" /></Icon></button>
            </GalleryScroll>
          </Gallery>
        </GroupBody>
        <Label text="Estilos" />
      </Group>

      <Group $w={157}>
        <GroupBody $pad={6}>
          <BigButton $w={46}>
            <BigIcon>
              <Icon w={32} h={27}>
                <g transform="translate(2 3)"><GridLines hi={null} /></g>
                <rect x="11.5" y="10.5" width="20" height="7" fill="#84c1f0" stroke="#1e6fb8" /><path d="M20.5 10V18" stroke="#1e6fb8" />
                <path d="M12 14H1M6.5 8.5L1 14L6.5 19.5" stroke="#fff" strokeWidth="4" />
                <path d="M12 12.5H3M12 15.5H3M6.5 8.5L1 14L6.5 19.5" stroke="#1e88d2" strokeWidth="1.3" />
              </Icon>
            </BigIcon>
            <BigLine>Insertar</BigLine>
            <BigLine><Caret /></BigLine>
          </BigButton>
          <BigButton $w={46}>
            <BigIcon>
              <Icon w={30} h={27}>
                <g transform="translate(0 3)"><GridLines hi={null} /></g>
                <path d="M0 11H4V17H0Z M20 11H29V17H20Z" fill="#f3f2f1" stroke="none" />
                <rect x="4.5" y="10.5" width="15" height="7" fill="#84c1f0" stroke="#1e6fb8" /><path d="M12.5 10V18" stroke="#1e6fb8" />
                <path d="M17 7.5L29 20.5M29 7.5L17 20.5" stroke="#f04e4e" strokeWidth="1.6" />
              </Icon>
            </BigIcon>
            <BigLine>Eliminar</BigLine>
            <BigLine><Caret /></BigLine>
          </BigButton>
          <BigButton $w={52}>
            <BigIcon>
              <Icon w={28} h={27}>
                <g transform="translate(0 4)"><GridLines hi={null} /><rect x="7.5" y="7.5" width="13" height="7" fill="#84c1f0" stroke="#1e6fb8" /></g>
                <path d="M6.5 0V3M22.5 0V3M6.5 1H22.5" stroke="#1e88d2" />
              </Icon>
            </BigIcon>
            <BigLine>Formato</BigLine>
            <BigLine><Caret /></BigLine>
          </BigButton>
        </GroupBody>
        <Label text="Celdas" />
      </Group>

      <Group $w={243}>
        <GroupBody $pad={11}>
          <SumColumn $row={23}>
            <SmallButton>
              <IconSlot><Icon w={13} h={15}><path d="M12 3V0.5H1L7 7.5L1 14.5H12V12" strokeWidth="1.2" /></Icon></IconSlot>
              Autosuma
              <IconSlot><Caret /></IconSlot>
            </SmallButton>
            <SmallButton>
              <IconSlot><Icon w={15} h={14}><path d="M0.5 0.5H14.5V13.5H0.5Z M0.5 2.5H14.5" fill="#fff" /><path d="M7.5 4V11.5M4.5 8.5L7.5 11.5L10.5 8.5" stroke="#1e88d2" strokeWidth="1.3" /></Icon></IconSlot>
              Rellenar
              <Caret />
            </SmallButton>
            <SmallButton>
              <IconSlot><Icon w={15} h={14} s="#a24fb0"><path d="M0.5 8.5L9.5 0.5L14.5 5L6 13.5Z" fill="#fff" /><path d="M0.5 8.5L4.5 5L9.5 10L6 13.5Z" fill="#d59ae0" /></Icon></IconSlot>
              Borrar
              <Caret />
            </SmallButton>
          </SumColumn>
          <BigButton $w={60}>
            <BigIcon>
              <Icon w={30} h={29}>
                <path d="M1.5 12L5.5 1.5L9.5 12M3 8H8" stroke="#1e88d2" strokeWidth="1.3" />
                <path d="M1.5 16.5H8.5L1.5 27.5H9" strokeWidth="1.3" />
                <path d="M13 7.5H29L23 14.5V24.5L19 21V14.5Z" fill="#fff" strokeWidth="1.2" />
              </Icon>
            </BigIcon>
            <BigLine>Ordenar y</BigLine>
            <BigLine>filtrar <Caret /></BigLine>
          </BigButton>
          <BigButton $w={68}>
            <BigIcon>
              <Icon w={30} h={31}><circle cx="18.5" cy="11.5" r="10" fill="#fff" /><path d="M12 19L1 30" strokeWidth="1.3" /></Icon>
            </BigIcon>
            <BigLine>Buscar y</BigLine>
            <BigLine>seleccionar <Caret /></BigLine>
          </BigButton>
        </GroupBody>
        <Label text="Edición" />
      </Group>
      <CollapseRibbon aria-label="Contraer la cinta">
        <Icon w={10} h={6} s="#666"><path d="M1 5.5L5 1.5L9 5.5" strokeWidth="1.8" /></Icon>
      </CollapseRibbon>
    </Ribbon>
  );
}

function Formula() {
  return (
    <FormulaBar>
      <Box $w={102}>
        <NameInput aria-label="Cuadro de nombres" defaultValue="B4" />
        <Caret />
      </Box>
      <Grip />
      <FunctionBox $w={110}>
        <FormulaIcon aria-label="Cancelar"><Icon w={11} h={11} s="#b9b7b5"><path d="M1 1L10 10M10 1L1 10" strokeWidth="1.6" /></Icon></FormulaIcon>
        <FormulaIcon aria-label="Introducir"><Icon w={13} h={11} s="#b9b7b5"><path d="M1 6L5 10L12 1" strokeWidth="1.8" /></Icon></FormulaIcon>
        <FormulaIcon aria-label="Insertar función"><FxMark>f<small>x</small></FxMark></FormulaIcon>
      </FunctionBox>
      <Box>
        <FormulaInput aria-label="Barra de fórmulas" defaultValue="Christian" />
        <FormulaExpand aria-label="Expandir barra de fórmulas"><Icon w={8} h={5} s="#666"><path d="M1 0.5L4 3.5L7 0.5" strokeWidth="1.8" /></Icon></FormulaExpand>
      </Box>
    </FormulaBar>
  );
}

function Workbook() {
  return (
    <SheetArea>
      <Sheet>
        <Grid>
          <colgroup>
            <col width={54} />
            {columnWidths.map((w, i) => <col key={i} width={w} />)}
          </colgroup>
          <thead>
            <tr>
              <Corner aria-label="Seleccionar todo" />
              {columns.map((c, i) => <ColHead key={c} scope="col" $on={i >= 1 && i <= 5}>{c}</ColHead>)}
            </tr>
          </thead>
          <tbody>
            {Array.from({ length: 19 }, (_, i) => i + 1).map((r) => (
              <tr key={r}>
                <RowHead scope="row" $on={r === 4}>{r}</RowHead>
                {sheetRow(r)}
              </tr>
            ))}
          </tbody>
        </Grid>
        <Selection />
      </Sheet>
      <VScroll>
        <ScrollButton aria-label="Subir"><Caret up /></ScrollButton>
        <Thumb $grow={684} />
        <Track $grow={78} />
        <ScrollButton aria-label="Bajar"><Caret /></ScrollButton>
      </VScroll>
    </SheetArea>
  );
}

function Bottom() {
  return (
    <>
      <SheetBar>
        <SheetNav>
          <Icon w={5} h={8} s="none"><path d="M4.5 0L0.5 4L4.5 8Z" fill="#b9b9b9" /></Icon>
          <Icon w={5} h={8} s="none"><path d="M0.5 0L4.5 4L0.5 8Z" fill="#b9b9b9" /></Icon>
        </SheetNav>
        <SheetTab>Hoja1</SheetTab>
        <AddSheet aria-label="Hoja nueva">
          <Icon w={17} h={17} s="#777"><circle cx="8.5" cy="8.5" r="7.5" /><path d="M8.5 5V12M5 8.5H12" strokeWidth="2" /></Icon>
        </AddSheet>
        <HScroll>
          <HGrip />
          <ScrollButton aria-label="Izquierda"><Icon w={4} h={7} s="none"><path d="M4 0L0.5 3.5L4 7Z" fill="#666" /></Icon></ScrollButton>
          <Thumb $grow={630} />
          <Track $grow={72} />
          <ScrollButton aria-label="Derecha"><Icon w={4} h={7} s="none"><path d="M0 0L3.5 3.5L0 7Z" fill="#666" /></Icon></ScrollButton>
        </HScroll>
      </SheetBar>
      <StatusBar>
        <Icon w={14} h={14} s="#555">
          <circle cx="3" cy="3" r="3" fill="#555" stroke="none" />
          <path d="M7 1.5H12.5V12.5H1.5V7.5 M3 7.5H5M6 7.5H8M9 7.5H11M3 10.5H5M6 10.5H8M9 10.5H11" />
          <path d="M7 1H13V4H7Z" fill="#555" stroke="none" />
        </Icon>
        <Stats>
          <span>Promedio: 35632917.5</span>
          <span>Recuento: 5</span>
          <span>Suma: 71265835</span>
        </Stats>
        <ViewButton $on aria-label="Normal"><Icon w={14} h={13} s="#555"><path d="M0.5 0.5H13.5V12.5H0.5Z M0.5 4.5H13.5M0.5 8.5H13.5M4.5 0.5V12.5M9.5 0.5V12.5" /></Icon></ViewButton>
        <ViewButton aria-label="Diseño de página"><Icon w={14} h={13} s="#555"><path d="M0.5 0.5H13.5V12.5H0.5Z M3.5 2.5H10.5V10.5H3.5Z M5 4.5H9M5 6.5H9M5 8.5H9" /></Icon></ViewButton>
        <ViewButton aria-label="Vista previa de salto de página"><Icon w={14} h={13} s="#555"><path d="M0.5 0.5H13.5V12.5H0.5Z M4.5 0.5V7.5H9.5V0.5M7.5 0.5V7.5" /></Icon></ViewButton>
        <ZoomControl>
          <Icon w={12} h={8} s="#555"><path d="M4 4H10" strokeWidth="2" /></Icon>
          <ZoomRange type="range" aria-label="Zoom" min={0} max={100} defaultValue={68} />
          <Icon w={8} h={8} s="#555"><path d="M0 4H8M4 0V8" strokeWidth="2" /></Icon>
          <span>205%</span>
        </ZoomControl>
      </StatusBar>
    </>
  );
}

const Doc = ({ c, letter }: { c: string; letter: React.ReactNode }) => (
  <Icon w={18} h={17} s="none">
    <rect x="9" y="2" width="8" height="13" fill="#fff" stroke={c} />
    <path d="M11 5H15M11 7.5H15M11 10H15M11 12.5H15" stroke={c} />
    <path d="M0 2L11 0V17L0 15Z" fill={c} />
    {letter}
  </Icon>
);

const apps: { name: string; icon: React.ReactNode; multi?: boolean; active?: boolean }[] = [
  { name: "Chrome", multi: true, icon: (
    <Icon w={16} h={16} s="none">
      <circle cx="8" cy="8" r="7.5" fill="#dd4b3e" />
      <path d="M1.5 4.3L6 12L7 15.5C2 15 -1 9 1.5 4.3Z" fill="#1da462" />
      <path d="M8 4.5H14.8C17 10 12.5 16 7 15.5L11.3 9.5Z" fill="#ffcd46" />
      <circle cx="8" cy="8" r="3.7" fill="#fff" /><circle cx="8" cy="8" r="2.9" fill="#4c8bf5" />
    </Icon>) },
  { name: "Explorador de archivos", multi: true, icon: (
    <Icon w={17} h={16} s="none"><path d="M0 1H6L7.5 3H16V14H0Z" fill="#fbd667" /><path d="M2 4H17V14H2Z" fill="#fde9a5" /><path d="M3 15V9H14V15H11V11.5H6V15Z" fill="#3fa7e0" /></Icon>) },
  { name: "Bloc de notas", multi: true, icon: (
    <Icon w={16} h={17} s="none"><path d="M4 2H16L13 16H1Z" fill="#a9d3e2" /><path d="M4.5 4H15M4 6.5H14.5M3.5 9H14M3 11.5H13.5" stroke="#6fa6bb" /><path d="M4 1H16" stroke="#ddd" strokeWidth="2" strokeDasharray="1 1" /></Icon>) },
  { name: "Word", icon: <Doc c="#2b579a" letter={<path d="M2 5.5L3.5 11.5L5.5 6L7.5 11.5L9 5.5" fill="none" stroke="#fff" strokeWidth="1.3" />} /> },
  { name: "PowerPoint", multi: true, icon: <Doc c="#d04727" letter={<path d="M4 13V5H6.5C9.5 5 9.5 9.5 6.5 9.5H4" fill="none" stroke="#fff" strokeWidth="1.7" />} /> },
  { name: "Astah", multi: true, icon: (
    <Icon w={16} h={16} s="none"><circle cx="8" cy="8" r="7.8" fill="#fff" /><path d="M1 8C4 3.5 7 2.5 10 4L14.5 9C15 10 15 11 14 12L9.5 7.5L7 9L5.5 7.5L1.5 11.5Z" fill="#222" /><path d="M5 13L8 10L11 13" stroke="#222" strokeWidth="1.2" /></Icon>) },
  { name: "Paint", icon: (
    <Icon w={17} h={16} s="none"><path d="M0.5 10C0 5 6 3 10 4.5C14 6 13 14 8 14.5C6 15 5.5 12.5 4 13.5C1.5 14 0.7 12 0.5 10Z" fill="#cfe6f5" /><circle cx="4" cy="8.5" r="1.4" fill="#e4572e" /><circle cx="7" cy="7" r="1.4" fill="#2f9e44" /><circle cx="10" cy="8.5" r="1.4" fill="#f2b632" /><circle cx="8.5" cy="11.5" r="1.5" fill="#1c6bb8" /><path d="M14 0.5L16 2L15 15H13Z" fill="#d9802e" /></Icon>) },
  { name: "Acrobat Reader", icon: (
    <Icon w={17} h={16} s="none"><rect width="17" height="16" fill="#c90e0e" /><rect y="12" width="17" height="4" fill="#8a0606" /><path d="M3 13C6 11 8.5 6 8 2.5C7.5 2 7.3 4 8.5 7C10 10 12 11 14.5 10.5C12 8.5 7 9.5 3 13Z" fill="none" stroke="#fff" /></Icon>) },
  { name: "Visual Studio", icon: (
    <Icon w={17} h={16} s="none"><path d="M12 0L16.5 2V14L12 16L5.5 9.5L2 12.5L0.5 11.5V4.5L2 3.5L5.5 6.5ZM12 4.5L8 8L12 11.5ZM2 6V10L4 8Z" fill="#8a5fd0" fillRule="evenodd" /></Icon>) },
  { name: "Correo", icon: (
    <Icon w={16} h={15} s="none"><path d="M0 5L8 0L16 5V14H0Z" fill="#fff" /><path d="M2 6H14L8 10.5Z" fill="#2b342e" /></Icon>) },
  { name: "Excel", active: true, icon: <Doc c="#217346" letter={<path d="M3 5L8 12M8 5L3 12" stroke="#fff" strokeWidth="1.6" />} /> },
  { name: "Lync", icon: (
    <Icon w={16} h={16} s="none"><rect width="16" height="16" fill="#2ba8dc" /><path d="M5.5 3V12.5H11" stroke="#fff" strokeWidth="2" /></Icon>) },
  { name: "MySQL Workbench", multi: true, icon: (
    <Icon w={16} h={16} s="none"><rect x="0.5" y="0.5" width="15" height="15" fill="#d8eef7" stroke="#fff" /><path d="M4 12V3C8 4 9 8 13 11.5C10 10 8 11 6 13Z" fill="#fff" stroke="#4a9cc2" /></Icon>) },
  { name: "Panel de control", icon: (
    <Icon w={17} h={13} s="none"><rect width="17" height="13" rx="1" fill="#48a4ea" /><rect x="1.5" y="1.5" width="14" height="10" fill="#d9eefc" /><circle cx="5" cy="5.5" r="2.7" fill="#1d78c9" /><path d="M5 5.5V2.8A2.7 2.7 0 0 1 7.7 5.5Z" fill="#f2a33a" /><path d="M9.5 3.5H14M9.5 6H14M3 10H7" stroke="#1d78c9" /><rect x="9" y="8" width="5" height="2" fill="#f2a33a" /></Icon>) },
  { name: "Favoritos", icon: (
    <Icon w={16} h={16} s="none"><path d="M8 0L10 5.5L16 6L11.5 9.5L13 16L8 12.5L3 15.5L4.5 9.5L0 6L6 5.5Z" fill="#f7c62f" /><path d="M8 8.5L10 5.5L16 6L11.5 9.5Z" fill="#d64550" /><path d="M8 8.5L11.5 9.5L13 16L8 12.5L3 15.5Z" fill="#9b7fd6" /></Icon>) },
];

function Tasks() {
  return (
    <TaskBar>
      <TaskButton aria-label="Inicio">
        <Icon w={16} h={16} s="none"><path d="M0 2.3L6.8 1.3V7.5H0Z M7.8 1.1L16 0V7.5H7.8Z M0 8.5H6.8V14.7L0 13.7Z M7.8 8.5H16V16L7.8 14.9Z" fill="#fff" /></Icon>
      </TaskButton>
      {apps.map((a) => (
        <TaskButton key={a.name} aria-label={a.name} $open={!a.active} $multi={a.multi} $active={a.active}>{a.icon}</TaskButton>
      ))}
      <Tray>
        <Battery>54%</Battery>
        <TrayItem $w={3}><Icon w={3} h={10} s="none"><rect width="2" height="10" fill="#fff" /></Icon></TrayItem>
        <TrayItem $w={20}><Icon w={9} h={15} s="none"><path d="M1.5 0H3V4H6V0H7.5V4H9V8L6 11V15H3V11L0 8V4H1.5Z" fill="#fff" /></Icon></TrayItem>
        <TrayItem $w={24}><Icon w={12} h={8} s="#fff"><path d="M0.5 7L6 1L11.5 7" strokeWidth="1.4" /></Icon></TrayItem>
        <TrayItem $w={24}>
          <Icon w={16} h={16} s="none"><rect width="16" height="16" fill="#001a9e" /><circle cx="8" cy="8" r="6.5" fill="#e51b23" /><circle cx="8" cy="8" r="3" fill="none" stroke="#fff" strokeWidth="1.6" /><path d="M5 4L12 11" stroke="#001a9e" strokeWidth="1.6" /></Icon>
        </TrayItem>
        <TrayItem $w={26}><Icon w={13} h={13} s="#aeb5b0"><path d="M0.5 12.5A12 12 0 0 1 12.5 0.5M4 12.5A8.5 8.5 0 0 1 12.5 4M7.5 12.5A5 5 0 0 1 12.5 7.5" /><circle cx="11.5" cy="11.5" r="1.3" fill="#fff" stroke="none" /></Icon></TrayItem>
        <TrayItem $w={18}><Icon w={14} h={13} s="#fff"><path d="M0.5 4.5H2.5L6.5 0.5V12.5L2.5 8.5H0.5Z M9 4.5L13 8.5M13 4.5L9 8.5" /></Icon></TrayItem>
        <TrayItem $w={40}>ESP</TrayItem>
        <TrayItem $w={54}>10:06:41</TrayItem>
        <TrayItem $w={38}><Icon w={17} h={16} s="none"><path d="M0 0H13V7L16 11L12 15L10 12H6L3 15V12H0Z" fill="#fff" /><path d="M2 3.5H11M2 6.5H11M2 9.5H8" stroke="#2b342e" /><circle cx="12" cy="12" r="2.5" fill="none" stroke="#2b342e" /></Icon></TrayItem>
      </Tray>
      <TrayItem $w={10} />
      <ShowDesktop aria-label="Mostrar escritorio" />
    </TaskBar>
  );
}

function Annotations() {
  return (
    <>
      <Ink width="1920" height="1080" viewBox="0 0 1920 1080" fill="none" strokeWidth="8" strokeLinecap="round" strokeLinejoin="round" shapeRendering="crispEdges" aria-hidden="true">
        <g stroke="#00f">
          <path d="M161 311H184" />
          <path d="M174 297L205 311L174 326L183 311Z" fill="#00f" />
          <path d="M1103 211L1056 312" />
          <path d="M1047 287L1048 322L1075 299L1056 304Z" fill="#00f" />
          <path d="M1284 431C1268 443 1252 437 1240 442C1228 446 1205 445 1172 445" />
          <path d="M1181 424L1163 444L1176 455L1174 444Z" fill="#00f" strokeWidth="10" />
          <g strokeLinejoin="miter">
            <rect x="559" y="323" width="115" height="52" />
            <rect x="195" y="492" width="402" height="270" />
            <rect x="181" y="823" width="565" height="179" />
          </g>
        </g>
        <g stroke="#0f0">
          <path d="M221 282H969" />
          <path d="M1400 806H1330" />
          <path d="M1346 792L1316 806L1346 821L1332 806Z" fill="#0f0" />
          <g strokeLinejoin="miter">
            <rect x="887" y="773" width="137" height="52" />
            <rect x="1028" y="778" width="265" height="44" />
          </g>
          <path d="M875 821L879 816H1294L1306 821" />
          <path d="M890 819H1290" strokeWidth="14" />
        </g>
        <g stroke="#f00">
          <path d="M697 578C691 572 692 566 692 556C691 540 694 515 689 500C683 492 668 493 656 488C648 486 644 486 636 476" />
          <path d="M608 475L623 454L640 473L622 470Z" fill="#f00" />
          <ellipse cx="778" cy="594" rx="76" ry="27" />
          <ellipse cx="966" cy="592" rx="86" ry="26" />
          <path d="M964 626C955 652 956 668 948 684C941 700 935 706 918 709C900 717 880 719 840 719H800C782 716 768 704 757 699C746 692 740 686 728 684C716 676 706 666 700 656C696 646 688 642 680 639C668 632 660 627 650 626H630" />
          <path d="M637 604C634 616 622 614 620 619C626 624 632 630 634 640L638 624Z" fill="#f00" />
        </g>
      </Ink>
      <Note $x={1109} $y={138}>columnas/campos/atributos</Note>
      <Note $x={1170} $y={362}>tuplas/objetos/elementos</Note>
      <Note $x={1408} $y={774} $green>esquema</Note>
      <TallNote $x={64} $y={378}>
        {"ENTIDADES".split("").map((c, i) => <span key={i}>{c}</span>)}
      </TallNote>
      <TallNote $x={1635} $y={418} $green>
        {"RELACIONES".split("").map((c, i) => <span key={i}>{c}</span>)}
      </TallNote>
      <NoteCaret />
    </>
  );
}

export default function App() {
  return (
    <Window>
      <GlobalStyle />
      <Title />
      <Tabs />
      <RibbonArea />
      <Formula />
      <Workbook />
      <Bottom />
      <Tasks />
      <Annotations />
    </Window>
  );
}
